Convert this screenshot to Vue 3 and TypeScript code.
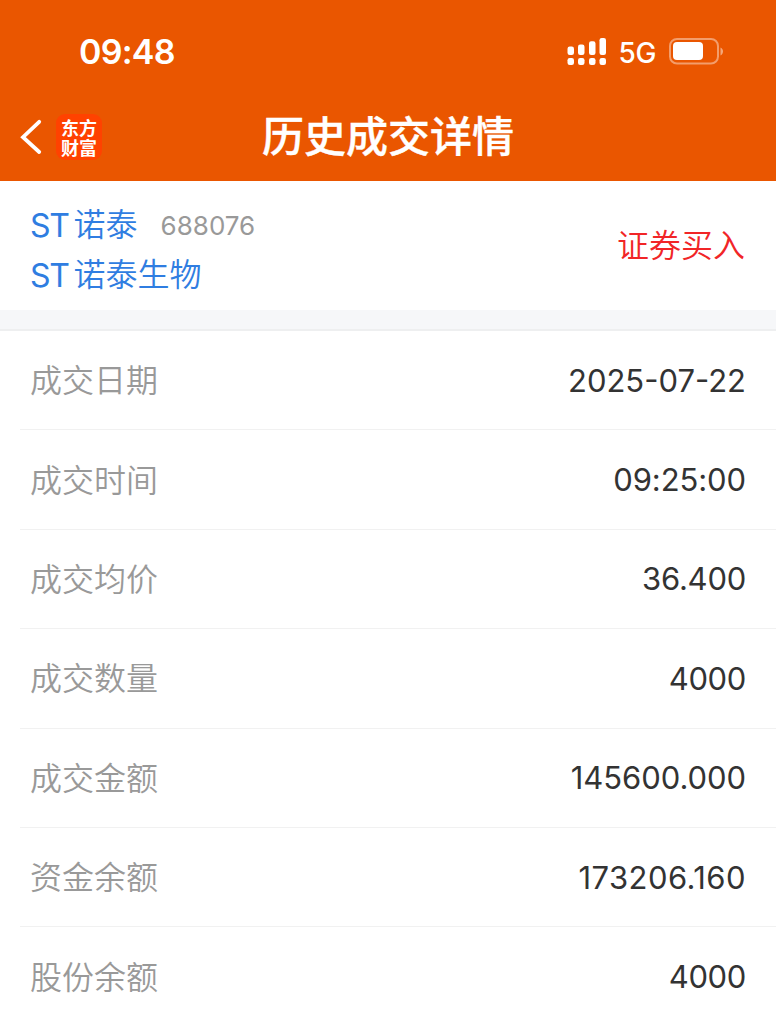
<script setup lang="ts">
interface DetailRow {
  label: string
  value: string
  tracking: number
}

const rows: DetailRow[] = [
  { label: '成交日期', value: '2025-07-22', tracking: 0 },
  { label: '成交时间', value: '09:25:00', tracking: -0.1 },
  { label: '成交均价', value: '36.400', tracking: -0.25 },
  { label: '成交数量', value: '4000', tracking: -0.35 },
  { label: '成交金额', value: '145600.000', tracking: -0.05 },
  { label: '资金余额', value: '173206.160', tracking: 0.45 },
  { label: '股份余额', value: '4000', tracking: -0.35 },
]
</script>

<template>
  <main class="screen">
    <header class="header">
      <div class="status">
        <span class="clock">09:48</span>
        <div class="indicators">
          <svg class="signal" width="40" height="28" viewBox="0 0 40 28" fill="#fff">
            <rect x="0.5" y="8.5" width="6.5" height="8.5" rx="2.2" />
            <rect x="11" y="6.5" width="6.5" height="10.5" rx="2.2" />
            <rect x="22" y="3.2" width="6.5" height="13.8" rx="2.2" />
            <rect x="32.5" y="0" width="6.5" height="17" rx="2.2" />
            <rect x="0.5" y="20" width="6.5" height="7" rx="2.2" />
            <rect x="11" y="20" width="6.5" height="7" rx="2.2" />
            <rect x="22" y="20" width="6.5" height="7" rx="2.2" />
            <rect x="32.5" y="20" width="6.5" height="7" rx="2.2" />
          </svg>
          <span class="network">5G</span>
          <svg class="battery" width="55" height="27" viewBox="0 0 55 27">
            <rect x="1" y="1" width="48" height="24.5" rx="7" fill="none" stroke="#fff" stroke-opacity=".42" stroke-width="2" />
            <rect x="4" y="4" width="30" height="18" rx="4" fill="#fff" />
            <path d="M51.5 9.5c3.4 1.6 3.4 6.3 0 7.9z" fill="#fff" fill-opacity=".48" />
          </svg>
        </div>
      </div>
      <nav class="nav">
        <div class="nav-side">
          <svg class="back" width="24" height="36" viewBox="0 0 24 36" fill="none" stroke="#fff" stroke-width="3.8" stroke-linecap="round">
            <path d="M19.2 2.8 3 18.2 19.2 33" stroke-linejoin="miter" />
          </svg>
          <div class="logo">东方<br />财富</div>
        </div>
        <h1 class="title">历史成交详情</h1>
        <div class="nav-side"></div>
      </nav>
    </header>

    <section class="stock">
      <div class="names">
        <div class="name-line">
          <span class="st">ST</span><span class="name">诺泰</span><span class="code">688076</span>
        </div>
        <div class="name-line"><span class="st">ST</span><span class="name">诺泰生物</span></div>
      </div>
      <span class="side">证券买入</span>
    </section>

    <div class="gap"></div>

    <section class="rows">
      <div v-for="row in rows" :key="row.label" class="row">
        <span class="label">{{ row.label }}</span>
        <span class="value" :style="{ letterSpacing: row.tracking + 'px' }">{{ row.value }}</span>
      </div>
    </section>
  </main>
</template>

<style>
body {
  margin: 0;
  background: #fff;
}
</style>

<style scoped>
.screen {
  width: 776px;
  height: 1024px;
  overflow: hidden;
  background: #fff;
  font-family: Inter, "Noto Sans CJK SC", sans-serif;
}
.header {
  box-sizing: border-box;
  height: 181px;
  background: #ea5600;
  color: #fff;
}
.status {
  display: flex;
  justify-content: space-between;
  align-items: center;
  height: 91px;
  padding: 12px 52px 0 79px;
  box-sizing: border-box;
}
.clock {
  font-size: 34px;
  font-weight: 600;
  line-height: 40px;
  letter-spacing: -0.75px;
}
.indicators {
  display: flex;
  align-items: center;
}
.network {
  margin: 3px 13px 0 12px;
  font-size: 28px;
  font-weight: 500;
  line-height: 34px;
  letter-spacing: -0.4px;
}
.nav {
  display: flex;
  align-items: center;
  height: 90px;
}
.nav-side {
  display: flex;
  align-items: center;
  width: 260px;
}
.back {
  margin: 2px 0 0 20px;
}
.logo {
  width: 46px;
  height: 42px;
  margin: 2px 0 0 12px;
  padding-top: 4px;
  border-radius: 9px;
  background: #ff4200;
  font-family: "Noto Sans CJK SC", sans-serif;
  font-size: 18px;
  font-weight: 700;
  line-height: 19.5px;
  text-align: center;
}
.title {
  width: 256px;
  margin: 1px 0 0;
  font-size: 42px;
  font-weight: 500;
  line-height: 60px;
  text-align: center;
  white-space: nowrap;
  -webkit-text-stroke: 0.4px #fff;
}
.stock {
  display: flex;
  justify-content: space-between;
  align-items: center;
  box-sizing: border-box;
  height: 129px;
  padding: 0 31px 0 30px;
}
.name-line {
  display: flex;
  align-items: center;
  height: 50px;
  color: #2f7de1;
  font-size: 32px;
}
.st {
  margin-top: 9px;
  letter-spacing: -1.3px;
}
.name {
  margin: 3px 0 0 5px;
  font-weight: 350;
}
.code {
  margin: 9px 0 0 23px;
  color: #999;
  font-size: 26px;
}
.side {
  margin-top: -6px;
  color: #f12527;
  font-size: 32px;
  font-weight: 350;
}
.gap {
  box-sizing: border-box;
  height: 21px;
  border-bottom: 2px solid #eeeff0;
  background: #f6f7f9;
}
.row {
  display: flex;
  justify-content: space-between;
  align-items: center;
  box-sizing: border-box;
  height: 99.4px;
  margin-left: 20px;
  padding: 0 30px 0 10px;
  border-bottom: 1px solid #f1f1f1;
}
.label {
  margin-top: -4px;
  color: #999;
  font-size: 32px;
  font-weight: 350;
}
.value {
  color: #333;
  font-size: 31px;
}
</style>
